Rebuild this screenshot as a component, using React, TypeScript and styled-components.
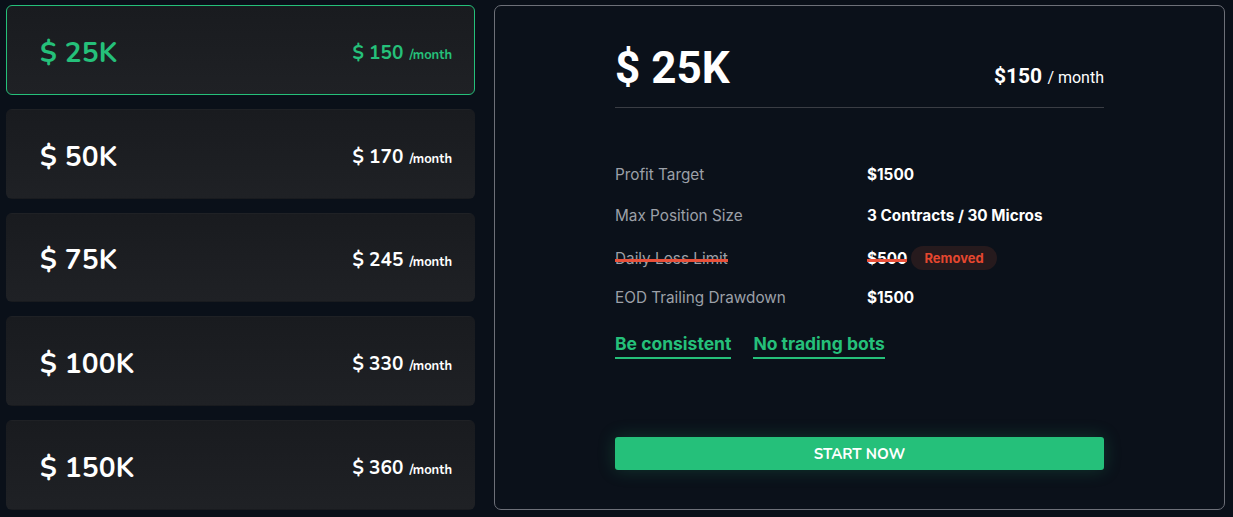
import styled, { createGlobalStyle, css } from 'styled-components'

const GlobalStyle = createGlobalStyle`
  html, body {
    margin: 0;
    padding: 0;
    background: #0a1019;
  }
  * {
    box-sizing: border-box;
  }
`;

const GREEN = '#25c07a';

// --- Layout ---

const Page = styled.div`
  display: flex;
  gap: 19px;
  padding: 5px 8px 7px 6px;
  height: 517px;
  background: #0a1019;
`;

const PlanList = styled.div`
  display: flex;
  flex-direction: column;
  gap: 14px;
  width: 469px;
  padding-top: 0;
`;

const PlanCard = styled.div<{ $active?: boolean }>`
  display: flex;
  align-items: center;
  justify-content: space-between;
  height: 91px;
  padding: 6px 22px 0 33px;
  border-radius: 6px;
  background: linear-gradient(180deg, #191b1f 0%, #1f2125 100%);
  border: 1px solid transparent;
  color: #ffffff;
  font-family: 'Nunito', Lato, 'Open Sans', sans-serif;
  cursor: pointer;

  ${({ $active }) =>
    $active &&
    css`
      border-color: ${GREEN};
      color: ${GREEN};
    `}
`;

const PlanSize = styled.div`
  font-size: 28px;
  font-weight: 700;
  letter-spacing: 0.2px;
`;

const PlanPrice = styled.div`
  font-size: 19px;
  font-weight: 700;

  span {
    font-size: 13px;
    margin-left: 1px;
  }
`;

// --- Detail panel ---

const DetailPanel = styled.div`
  flex: 1;
  height: 505px;
  border: 1px solid #6d7078;
  border-radius: 7px;
  background: #0b111a;
  display: flex;
  justify-content: center;
  padding-top: 36px;
`;

const DetailInner = styled.div`
  width: 489px;
  display: flex;
  flex-direction: column;
`;

const DetailHeader = styled.div`
  display: flex;
  align-items: baseline;
  justify-content: space-between;
  padding-bottom: 13px;
  border-bottom: 1px solid #3a3d44;
  color: #ffffff;
  font-family: 'Liberation Sans Narrow', Roboto, 'Liberation Sans', sans-serif;
`;

const HeaderSize = styled.div`
  font-size: 44px;
  font-weight: 700;
  line-height: 52px;
`;

const HeaderPrice = styled.div`
  font-size: 21px;
  font-weight: 700;

  span {
    font-size: 16px;
    font-weight: 400;
  }
`;

const RuleList = styled.div`
  display: flex;
  flex-direction: column;
  gap: 21px;
  margin-top: 56px;
  font-family: Inter, 'Noto Sans', sans-serif;
  font-size: 15.3px;
`;

const RuleRow = styled.div`
  display: grid;
  grid-template-columns: 252px 1fr;
  align-items: center;
  height: 20px;
`;

const strike = css`
  position: relative;
  &::after {
    content: '';
    position: absolute;
    left: 0;
    right: 0;
    top: 55%;
    height: 3px;
    background: #e8503a;
  }
`;

const RuleLabel = styled.div<{ $removed?: boolean }>`
  color: #9ca0a8;
  justify-self: start;
  ${({ $removed }) => $removed && strike}
`;

const RuleValue = styled.div`
  display: flex;
  align-items: center;
  gap: 4px;
  color: #ffffff;
  font-weight: 700;
`;

const StrikeValue = styled.span`
  ${strike}
`;

const RemovedBadge = styled.span`
  background: #261a1d;
  color: #e5472f;
  font-size: 13px;
  font-weight: 700;
  border-radius: 12px;
  padding: 4px 13px;
`;

const Tags = styled.div`
  display: flex;
  gap: 22px;
  margin-top: 26px;
`;

const Tag = styled.div`
  color: ${GREEN};
  font-family: Inter, 'Noto Sans', sans-serif;
  font-size: 17.5px;
  font-weight: 700;
  padding-bottom: 3px;
  border-bottom: 2px solid ${GREEN};
`;

const StartButton = styled.button`
  margin-top: 78px;
  height: 33px;
  width: 100%;
  border: none;
  border-radius: 3px;
  background: ${GREEN};
  color: #ffffff;
  font-family: 'Nunito', Lato, 'Open Sans', sans-serif;
  font-size: 15px;
  font-weight: 700;
  box-shadow: 0 0 18px rgba(37, 192, 122, 0.22);
  cursor: pointer;
`;

const plans = [
  { size: '25K', price: 150 },
  { size: '50K', price: 170 },
  { size: '75K', price: 245 },
  { size: '100K', price: 330 },
  { size: '150K', price: 360 },
];

function App() {
  const active = plans[0];

  return (
    <>
      <GlobalStyle />
      <Page>
        <PlanList>
          {plans.map((p, i) => (
            <PlanCard key={p.size} $active={i === 0}>
              <PlanSize>$ {p.size}</PlanSize>
              <PlanPrice>
                $ {p.price} <span>/month</span>
              </PlanPrice>
            </PlanCard>
          ))}
        </PlanList>

        <DetailPanel>
          <DetailInner>
            <DetailHeader>
              <HeaderSize>$ {active.size}</HeaderSize>
              <HeaderPrice>
                ${active.price} <span>/ month</span>
              </HeaderPrice>
            </DetailHeader>

            <RuleList>
              <RuleRow>
                <RuleLabel>Profit Target</RuleLabel>
                <RuleValue>$1500</RuleValue>
              </RuleRow>
              <RuleRow>
                <RuleLabel>Max Position Size</RuleLabel>
                <RuleValue>3 Contracts / 30 Micros</RuleValue>
              </RuleRow>
              <RuleRow>
                <RuleLabel $removed>Daily Loss Limit</RuleLabel>
                <RuleValue>
                  <StrikeValue>$500</StrikeValue>
                  <RemovedBadge>Removed</RemovedBadge>
                </RuleValue>
              </RuleRow>
              <RuleRow>
                <RuleLabel>EOD Trailing Drawdown</RuleLabel>
                <RuleValue>$1500</RuleValue>
              </RuleRow>
            </RuleList>

            <Tags>
              <Tag>Be consistent</Tag>
              <Tag>No trading bots</Tag>
            </Tags>

            <StartButton>START NOW</StartButton>
          </DetailInner>
        </DetailPanel>
      </Page>
    </>
  )
}

export default App;
